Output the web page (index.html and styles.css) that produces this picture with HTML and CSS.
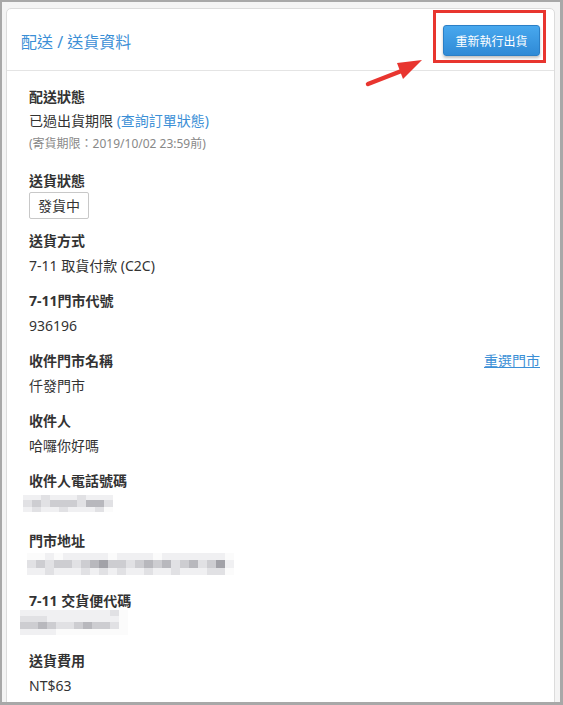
FILE: index.html
```html
<!DOCTYPE html>
<html lang="zh-Hant">
<head>
    <meta charset="UTF-8">
    <meta name="viewport" content="width=device-width, initial-scale=1.0">
    <title>配送 / 送貨資料</title>
    <link rel="stylesheet" href="styles.css">
</head>
<body>
    <div class="frame">
        <div class="panel">
            <!-- Intestazione pannello -->
            <div class="panel-head">
                <h2 class="panel-title">配送 / 送貨資料</h2>
                <button class="btn-primary">重新執行出貨</button>
            </div>

            <div class="panel-body">
                <div class="field field-first">
                    <div class="label">配送狀態</div>
                    <div class="value value-tight">已過出貨期限 <a class="link" href="#">(查詢訂單狀態)</a></div>
                    <div class="note">(寄貨期限：2019/10/02 23:59前)</div>
                </div>

                <div class="field field-badge">
                    <div class="label">送貨狀態</div>
                    <span class="badge">發貨中</span>
                </div>

                <div class="field">
                    <div class="label">送貨方式</div>
                    <div class="value">7-11 取貨付款 (C2C)</div>
                </div>

                <div class="field">
                    <div class="label">7-11門市代號</div>
                    <div class="value">936196</div>
                </div>

                <div class="field">
                    <div class="label-row">
                        <div class="label">收件門市名稱</div>
                        <a class="link link-under" href="#">重選門市</a>
                    </div>
                    <div class="value">仟發門市</div>
                </div>

                <div class="field">
                    <div class="label">收件人</div>
                    <div class="value">哈囉你好嗎</div>
                </div>

                <div class="field">
                    <div class="label">收件人電話號碼</div>
                    <div class="blur blur-phone">
                        <div class="row r-light"><i class="c1"></i><i class="c1"></i><i class="c2"></i><i class="c1"></i><i class="c1"></i><i class="c1"></i><i class="c2"></i><i class="c1"></i><i class="c1"></i><i class="c1"></i></div>
                        <div class="row"><i class="c2"></i><i class="c3"></i><i class="c2"></i><i class="c3"></i><i class="c3"></i><i class="c3"></i><i class="c2"></i><i class="c4"></i><i class="c4"></i><i class="c2"></i></div>
                        <div class="row r-light"><i class="c1"></i><i class="c2"></i><i class="c1"></i><i class="c1"></i><i class="c2"></i><i class="c1"></i><i class="c1"></i><i class="c1"></i><i class="c2"></i><i class="c0"></i></div>
                    </div>
                </div>

                <div class="field">
                    <div class="label">門市地址</div>
                    <div class="blur blur-addr">
                        <div class="row r-light"><i class="c0"></i><i class="c0"></i><i class="c1"></i><i class="c0"></i><i class="c1"></i><i class="c1"></i><i class="c1"></i><i class="c1"></i><i class="c1"></i><i class="c0"></i><i class="c1"></i><i class="c1"></i><i class="c1"></i><i class="c1"></i><i class="c0"></i><i class="c1"></i><i class="c1"></i><i class="c1"></i><i class="c1"></i><i class="c1"></i><i class="c1"></i><i class="c1"></i><i class="c0"></i></div>
                        <div class="row"><i class="c2"></i><i class="c3"></i><i class="c2"></i><i class="c3"></i><i class="c3"></i><i class="c2"></i><i class="c3"></i><i class="c4"></i><i class="c5"></i><i class="c3"></i><i class="c3"></i><i class="c2"></i><i class="c3"></i><i class="c4"></i><i class="c3"></i><i class="c4"></i><i class="c2"></i><i class="c3"></i><i class="c4"></i><i class="c2"></i><i class="c3"></i><i class="c5"></i><i class="c1"></i></div>
                        <div class="row r-light"><i class="c1"></i><i class="c1"></i><i class="c2"></i><i class="c1"></i><i class="c1"></i><i class="c1"></i><i class="c2"></i><i class="c1"></i><i class="c2"></i><i class="c1"></i><i class="c2"></i><i class="c1"></i><i class="c1"></i><i class="c2"></i><i class="c1"></i><i class="c1"></i><i class="c2"></i><i class="c1"></i><i class="c1"></i><i class="c1"></i><i class="c2"></i><i class="c2"></i><i class="c0"></i></div>
                    </div>
                </div>

                <div class="field">
                    <div class="label">7-11 交貨便代碼</div>
                    <div class="blur blur-code">
                        <div class="row r-light"><i class="c1"></i><i class="c1"></i><i class="c1"></i><i class="c1"></i><i class="c1"></i><i class="c1"></i><i class="c1"></i><i class="c1"></i><i class="c1"></i><i class="c1"></i><i class="c2"></i><i class="c0"></i></div>
                        <div class="row r-light"><i class="c2"></i><i class="c2"></i><i class="c2"></i><i class="c1"></i><i class="c1"></i><i class="c1"></i><i class="c1"></i><i class="c1"></i><i class="c1"></i><i class="c1"></i><i class="c1"></i><i class="c0"></i></div>
                        <div class="row"><i class="c3"></i><i class="c3"></i><i class="c4"></i><i class="c3"></i><i class="c2"></i><i class="c2"></i><i class="c3"></i><i class="c4"></i><i class="c3"></i><i class="c3"></i><i class="c2"></i><i class="c0"></i></div>
                        <div class="row r-light"><i class="c1"></i><i class="c1"></i><i class="c1"></i><i class="c1"></i><i class="c0"></i><i class="c0"></i><i class="c0"></i><i class="c0"></i><i class="c0"></i><i class="c0"></i><i class="c0"></i><i class="c0"></i></div>
                    </div>
                </div>

                <div class="field">
                    <div class="label">送貨費用</div>
                    <div class="value">NT$63</div>
                </div>
            </div>
        </div>

        <!-- Annotazioni sopra lo screenshot -->
        <div class="mark-box"></div>
        <svg class="mark-arrow" width="70" height="40" viewBox="0 0 70 40">
            <line x1="4" y1="32" x2="40" y2="18" stroke="#e8352f" stroke-width="4.5" stroke-linecap="round"/>
            <polygon points="58,8 33,11 39,27" fill="#e8352f"/>
        </svg>
    </div>
</body>
</html>
```

FILE: styles.css
```css
html, body {
    margin: 0;
    padding: 0;
}
body {
    font-family: "Noto Sans", "Noto Sans CJK TC", sans-serif;
    color: #333;
    background-color: #a8a8a8;
}
.frame {
    position: relative;
    box-sizing: border-box;
    width: 563px;
    height: 705px;
    border: solid #a8a8a8;
    border-width: 2px 3px 3px 2px;
    background-color: #f4f4f4;
    padding: 6px 5px 0 4px;
    overflow: hidden;
}
.panel {
    background-color: #fff;
    border: 1px solid #dcdcdc;
    border-radius: 5px;
    height: 720px;
}
.panel-head {
    display: flex;
    justify-content: space-between;
    align-items: center;
    height: 61px;
    padding: 0 14px 0 14px;
    border-bottom: 1px solid #e4e4e4;
}
.panel-title {
    margin: 0;
    font-size: 16px;
    font-weight: normal;
    color: #3b8fd6;
    padding-top: 2px;
}
.btn-primary {
    font-family: inherit;
    width: 97px;
    height: 31px;
    margin-top: 2px;
    padding: 0;
    font-size: 12px;
    color: #fff;
    background: linear-gradient(#48a8ee, #2f8ad6);
    border: 1px solid #2b7fc6;
    border-radius: 3px;
    box-shadow: 0 2px 3px rgba(0, 0, 0, 0.25);
    cursor: pointer;
}
.panel-body {
    padding: 16px 14px 0 22px;
}
.field {
    margin-bottom: 15px;
}
.field-first {
    margin-bottom: 18px;
}
.field-badge {
    margin-bottom: 12px;
}
.label-row {
    display: flex;
    justify-content: space-between;
    align-items: center;
}
.label {
    font-size: 14px;
    font-weight: bold;
    line-height: 20px;
}
.value {
    font-size: 14px;
    line-height: 20px;
    margin-top: 5px;
}
.value-tight {
    margin-top: 4px;
}
.note {
    font-size: 12px;
    color: #888;
    line-height: 18px;
    margin-top: 4px;
}
.link {
    color: #3b8fd6;
    text-decoration: none;
}
.link-under {
    font-size: 14px;
    line-height: 20px;
    text-decoration: underline;
}
.badge {
    display: inline-block;
    margin-top: 1px;
    padding: 0 8px;
    height: 25px;
    line-height: 25px;
    font-size: 14px;
    border: 1px solid #c8c8c8;
    border-radius: 2px;
}

/* Dati oscurati (mosaico) */
.blur {
    display: flex;
    flex-direction: column;
    margin-top: 5px;
    height: 20px;
}
.blur .row {
    display: flex;
    flex-shrink: 0;
    height: 7px;
}
.blur .row.r-light {
    height: 5px;
}
.blur i {
    display: block;
    width: 9px;
    height: 100%;
}
.blur-phone {
    margin-left: -6px;
}
.blur-phone .row:first-child {
    margin-top: -1px;
}
.blur-addr {
    margin-left: -2px;
}
.blur-addr .row:first-child {
    margin-top: -3px;
}
.blur-addr .row {
    height: 8px;
}
.blur-addr .row.r-light {
    height: 7px;
}
.blur-code {
    margin-left: -9px;
}
.blur-code .row:first-child {
    margin-top: -6px;
}
.blur-code .row {
    height: 7px;
}
.blur-code .row.r-light {
    height: 6px;
}
.c0 { background-color: #fbfbfb; }
.c1 { background-color: #f0f0f2; }
.c2 { background-color: #e1e1e4; }
.c3 { background-color: #cdcdd1; }
.c4 { background-color: #b8b8bd; }
.c5 { background-color: #a2a2a8; }

/* Annotazioni */
.mark-box {
    position: absolute;
    left: 431px;
    top: 8px;
    width: 107px;
    height: 47px;
    border: 3px solid #e8352f;
}
.mark-arrow {
    position: absolute;
    left: 362px;
    top: 50px;
}
```
